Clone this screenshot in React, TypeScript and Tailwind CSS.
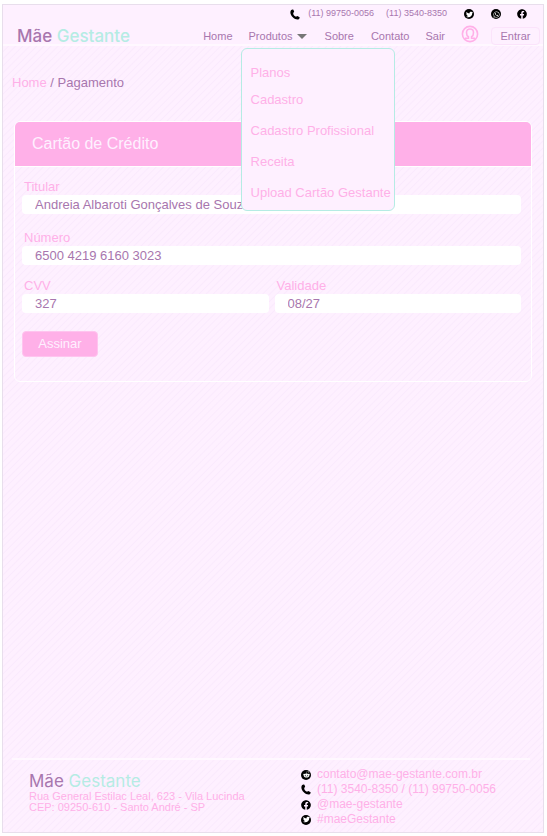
import React from "react";
import { FaFacebook, FaRedditAlien, FaTwitter, FaWhatsapp } from "react-icons/fa";

function Disc({ children }: { children: React.ReactNode }) {
  return (
    <span className="flex size-[10px] items-center justify-center rounded-full bg-black text-[7px] text-white">
      {children}
    </span>
  );
}

function PhoneIcon({ className = "" }: { className?: string }) {
  return (
    <svg viewBox="0 0 20 22" className={`h-[11px] w-[10px] ${className}`} aria-hidden="true">
      <path
        d="M2 2.500C3.500 1 6 .5 7 2l1.200 3c.3 1-.2 1.800-1.700 2.600-.6 3 2.500 7.400 5.800 7.900 1-1.400 2-1.700 3-1.200l3.200 1.600c1.400 1 .8 3.200-1 4.400C10.500 23.500-3.500 11 2 2.500z"
        fill="#000"
      />
    </svg>
  );
}

function Logo({ className }: { className: string }) {
  return (
    <a href="#" className={`whitespace-nowrap font-[Inter,sans-serif] text-[17px] leading-5 text-[#a876ae] ${className}`}>
      Mãe <span className="text-[#b5ece4]">Gestante</span>
    </a>
  );
}

function UserIcon() {
  return (
    <svg viewBox="0 0 18 18" className="size-[18px]" fill="none" stroke="#ffb0e8" strokeWidth="1.6" aria-hidden="true">
      <circle cx="9" cy="9" r="7.6" />
      <path d="M4 13.300h3.400v-1.500C6 11 5.500 9.500 5.500 7.500 5.500 5.300 7 4 9 4s3.500 1.300 3.500 3.500c0 2-.5 3.500-1.900 4.300v1.500H14" />
    </svg>
  );
}

const products = ["Cadastro", "Cadastro Profissional", "Receita", "Upload Cartão Gestante"];

function Field({ id, label, value, className = "" }: { id: string; label: string; value: string; className?: string }) {
  return (
    <div className={className}>
      <label htmlFor={id} className="block pl-[2px] text-[13px] leading-4 text-[#ffb0e8]">
        {label}
      </label>
      <input
        id={id}
        defaultValue={value}
        className="block h-[19px] w-full rounded bg-white px-[13px] text-[13px] leading-4 text-[#a876ae] outline-none"
      />
    </div>
  );
}

export default function App() {
  return (
    <div className="flex min-h-screen flex-col bg-white pt-1 pr-[3px] pb-[3px] pl-[2px] font-['Liberation_Sans',Arial,sans-serif]">
      <div className="flex grow flex-col border border-[#e8deec] bg-[#fef0ff]">
        <header className="flex h-[41px] items-end justify-between border-b-2 border-[#fff8ff] pr-[3px] pl-[14px]">
          <Logo className="mb-[-2px] font-medium" />
          <div className="flex flex-col">
            <div className="flex h-5 items-center justify-end pr-[13px] text-[9px] text-[#a876ae]">
              <PhoneIcon className="mr-2" />
              <a href="tel:11997500056" className="mr-3">(11) 99750-0056</a>
              <a href="tel:1135408350" className="mr-[17px]">(11) 3540-8350</a>
              <a href="#" aria-label="Twitter" className="mr-[17px]"><Disc><FaTwitter /></Disc></a>
              <a href="#" aria-label="WhatsApp" className="mr-4"><Disc><FaWhatsapp /></Disc></a>
              <a href="#" aria-label="Facebook"><FaFacebook className="size-[10px] text-black" /></a>
            </div>
            <nav className="flex h-5 items-center pt-1 text-[11px] text-[#a876ae]">
              <a href="#" className="mr-4">Home</a>
              <div className="relative mr-[18px]">
                <button type="button" aria-expanded="true" className="flex items-center gap-1">
                  Produtos
                  <svg viewBox="0 0 10 5" className="h-[5px] w-[10px]" fill="#777" aria-hidden="true">
                    <path d="M0 0h10L5 5z" />
                  </svg>
                </button>
                <ul className="absolute top-5 left-[-8px] z-10 w-[154px] rounded-md border border-[#b5ece4] bg-[#fef0ff] pt-4 pb-[2px] pl-[9px] text-[13px] whitespace-nowrap text-[#ffb0e8]">
                  <li className="mb-[3px] leading-4"><a href="#">Planos</a></li>
                  {products.map((p) => (
                    <li key={p} className="leading-[31px]"><a href="#">{p}</a></li>
                  ))}
                </ul>
              </div>
              <a href="#" className="mr-[17px]">Sobre</a>
              <a href="#" className="mr-4">Contato</a>
              <a href="#" className="mr-4">Sair</a>
              <a href="#" aria-label="Perfil" className="mr-3 mb-1"><UserIcon /></a>
              <button type="button" className="h-[18px] w-[49px] rounded border border-[#fbe3fb]">Entrar</button>
            </nav>
          </div>
        </header>

        <main className="flex grow flex-col bg-[repeating-linear-gradient(135deg,#fef0ff_0px,#fef0ff_3px,#faeafd_4px,#fef0ff_5px)] px-[11px]">
          <div className="ml-[-2px] pt-7 text-[13px] leading-[18px] text-[#a876ae]">
            <a href="#" className="text-[#ffb0e8]">Home</a> / Pagamento
          </div>
          <section className="mt-[29px] rounded-md border border-white">
            <h1 className="rounded-t-[5px] border-b border-white bg-[#ffb0e8] pl-[17px] text-[16px] leading-[44px] text-[#fef0ff]">
              Cartão de Crédito
            </h1>
            <form className="pt-3 pr-[10px] pb-6 pl-[7px]" onSubmit={(e) => e.preventDefault()}>
              <Field id="titular" label="Titular" value="Andreia Albaroti Gonçalves de Souza" />
              <Field id="numero" label="Número" value="6500 4219 6160 3023" className="mt-4" />
              <div className="mt-[13px] grid grid-cols-2 gap-[6px]">
                <Field id="cvv" label="CVV" value="327" />
                <Field id="validade" label="Validade" value="08/27" />
              </div>
              <button type="submit" className="mt-[18px] h-[26px] w-[76px] rounded border border-[#ffc4ef] bg-[#ffb0e8] text-[13px] text-[#fef0ff]">
                Assinar
              </button>
            </form>
          </section>

          <footer className="mt-auto mr-[2px] ml-[-2px] grid grid-cols-[272px_1fr] border-t-2 border-[#fff8ff] pt-[7px] pb-[5px] pl-[17px] text-[#ffb0e8]">
            <div className="pt-1 text-[11px] leading-[11px]">
              <Logo className="block" />
              <address className="not-italic">
                Rua General Estilac Leal, 623 - Vila Lucinda
                <br />
                CEP: 09250-610 - Santo André - SP
              </address>
            </div>
            <ul className="text-[12px] leading-[15px]">
              <li className="flex items-center gap-[6px]"><Disc><FaRedditAlien /></Disc><a href="mailto:contato@mae-gestante.com.br">contato@mae-gestante.com.br</a></li>
              <li className="flex items-center gap-[6px]"><PhoneIcon />(11) 3540-8350 / (11) 99750-0056</li>
              <li className="flex items-center gap-[6px]"><FaFacebook className="size-[10px] text-black" /><a href="#">@mae-gestante</a></li>
              <li className="flex items-center gap-[6px]"><Disc><FaTwitter /></Disc><a href="#">#maeGestante</a></li>
            </ul>
          </footer>
        </main>
      </div>
    </div>
  );
}
